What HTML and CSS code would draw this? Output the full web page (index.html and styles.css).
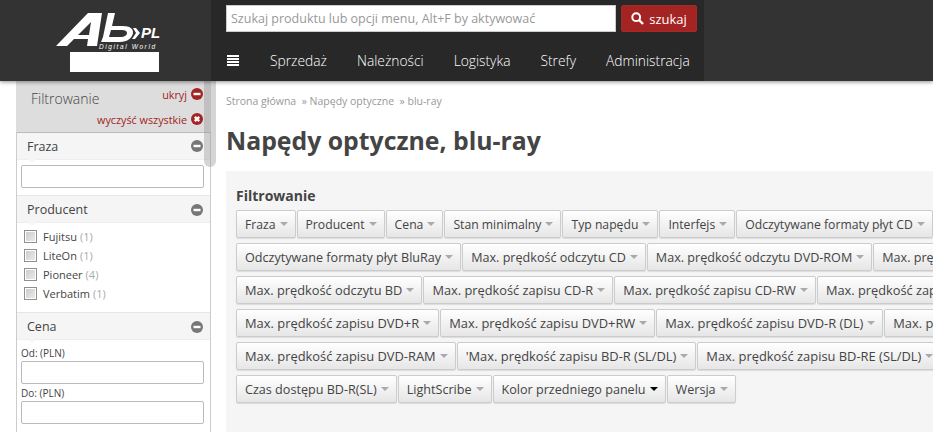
FILE: index.html
```html
<!DOCTYPE html>
<html lang="en">
<head>
  <meta charset="UTF-8" />
  <title>Napędy optyczne, blu-ray</title>
  <link rel="stylesheet" href="styles.css">
</head>
<body>
  <svg class="sprite" width="0" height="0">
    <symbol id="minus" viewBox="0 0 12 12">
      <circle cx="6" cy="6" r="6" fill="currentColor" />
      <rect x="2.5" y="4.8" width="7" height="2.4" fill="#fff" />
    </symbol>
    <symbol id="cross" viewBox="0 0 12 12">
      <circle cx="6" cy="6" r="6" fill="currentColor" />
      <path d="M3.8 3.8l4.4 4.4M8.2 3.8l-4.4 4.4" stroke="#fff" stroke-width="2.4" />
    </symbol>
  </svg>

  <header class="topbar">
    <div class="logo-area">
      <svg class="logo" width="114" height="38" viewBox="0 0 114 38">
        <path fill-rule="evenodd" d="M0 36L32 3h14l-5 33H31l1-7H18l-7 7zM22 25h11l2-13z" fill="#fff" />
        <path fill-rule="evenodd" d="M52 3h7l-3 13h11c7 0 10 3 10 6 0 6-6 10-13 10H45l2-5h17c5 0 7-2 7-4 0-2-2-3-5-3H55l-2 7h-6z" fill="#fff" />
        <path d="M77 18h3l4 5-5 6h-3l4-6z" fill="#fff" />
        <text x="85" y="28" class="logo-pl">PL</text>
        <text x="43" y="39" class="logo-sub">Digital World</text>
      </svg>
      <div class="logo-box"></div>
    </div>
    <div class="top-center">
      <form class="search">
        <input class="search-input" type="text" placeholder="Szukaj produktu lub opcji menu, Alt+F by aktywować" />
        <button class="search-btn" type="button">
          <svg width="13" height="13" viewBox="0 0 13 13">
            <circle cx="5.2" cy="5.2" r="3.9" fill="none" stroke="#fff" stroke-width="2" />
            <path d="M8 8l4 4" stroke="#fff" stroke-width="2.4" />
          </svg>
          szukaj
        </button>
      </form>
      <nav class="nav">
        <span class="burger"><i></i><i></i><i></i><i></i></span>
        <a>Sprzedaż</a>
        <a>Należności</a>
        <a>Logistyka</a>
        <a>Strefy</a>
        <a>Administracja</a>
      </nav>
    </div>
  </header>

  <div class="page">
    <aside class="sidebar">
      <div class="side-top">
        <span class="side-title">Filtrowanie</span>
        <div class="side-links">
          <a class="side-link">ukryj <svg width="12" height="12"><use href="#minus" /></svg></a>
          <a class="side-link">wyczyść wszystkie <svg width="12" height="12"><use href="#cross" /></svg></a>
        </div>
      </div>
      <div class="side-box">
        <section>
          <h3 class="sec-head">Fraza <svg width="12" height="12"><use href="#minus" /></svg></h3>
          <div class="sec-body"><input class="field" type="text" /></div>
        </section>
        <section>
          <h3 class="sec-head">Producent <svg width="12" height="12"><use href="#minus" /></svg></h3>
          <div class="sec-body checks">
            <label><input class="check" type="checkbox" />Fujitsu <em>(1)</em></label>
            <label><input class="check" type="checkbox" />LiteOn <em>(1)</em></label>
            <label><input class="check" type="checkbox" />Pioneer <em>(4)</em></label>
            <label><input class="check" type="checkbox" />Verbatim <em>(1)</em></label>
          </div>
        </section>
        <section>
          <h3 class="sec-head">Cena <svg width="12" height="12"><use href="#minus" /></svg></h3>
          <div class="sec-body prices">
            <label>Od: (PLN)</label>
            <input class="field" type="text" />
            <label>Do: (PLN)</label>
            <input class="field" type="text" />
          </div>
        </section>
      </div>
      <div class="side-scroll"></div>
    </aside>

    <main class="content">
      <div class="crumbs">Strona główna &nbsp;»&nbsp;Napędy optyczne &nbsp;»&nbsp;blu-ray</div>
      <h1>Napędy optyczne, blu-ray</h1>
      <div class="filters">
        <h4>Filtrowanie</h4>
        <div class="filter-row tight">
          <button>Fraza<b></b></button>
          <button>Producent<b></b></button>
          <button>Cena<b></b></button>
          <button>Stan minimalny<b></b></button>
          <button>Typ napędu<b></b></button>
          <button>Interfejs<b></b></button>
          <button>Odczytywane formaty płyt CD<b></b></button>
        </div>
        <div class="filter-row">
          <button>Odczytywane formaty płyt BluRay<b></b></button>
          <button>Max. prędkość odczytu CD<b></b></button>
          <button>Max. prędkość odczytu DVD-ROM<b></b></button>
          <button>Max. prędkość odczytu DVD<b></b></button>
        </div>
        <div class="filter-row mid">
          <button>Max. prędkość odczytu BD<b></b></button>
          <button>Max. prędkość zapisu CD-R<b></b></button>
          <button>Max. prędkość zapisu CD-RW<b></b></button>
          <button>Max. prędkość zapisu DVD-R<b></b></button>
        </div>
        <div class="filter-row wide">
          <button>Max. prędkość zapisu DVD+R<b></b></button>
          <button>Max. prędkość zapisu DVD+RW<b></b></button>
          <button>Max. prędkość zapisu DVD-R (DL)<b></b></button>
          <button>Max. prędkość zapisu DVD+R (DL)<b></b></button>
        </div>
        <div class="filter-row wide">
          <button>Max. prędkość zapisu DVD-RAM<b></b></button>
          <button>'Max. prędkość zapisu BD-R (SL/DL)<b></b></button>
          <button>Max. prędkość zapisu BD-RE (SL/DL)<b></b></button>
        </div>
        <div class="filter-row">
          <button>Czas dostępu BD-R(SL)<b></b></button>
          <button>LightScribe<b></b></button>
          <button>Kolor przedniego panelu<b class="dark"></b></button>
          <button>Wersja<b></b></button>
        </div>
      </div>
    </main>
  </div>
</body>
</html>
```

FILE: styles.css
```css
html, body {
  margin: 0;
  height: 432px;
  overflow: hidden;
}
body {
  font-family: "Open Sans", sans-serif;
  font-size: 12px;
  background: #fff;
  color: #444;
}
.sprite {
  position: absolute;
}

/* top bar */
.topbar {
  position: relative;
  z-index: 3;
  display: flex;
  height: 81px;
  background: #333;
  box-shadow: 0 1px 4px rgba(0,0,0,0.45);
}
.logo-area {
  width: 211px;
  box-sizing: border-box;
  padding: 10px 0 0 56px;
}
.logo {
  display: block;
  overflow: visible;
}
.logo-pl {
  font: italic bold 15px "Liberation Sans", sans-serif;
  fill: #fff;
}
.logo-sub {
  font: italic 6.5px "Liberation Sans", sans-serif;
  letter-spacing: 1.6px;
  fill: #fff;
}
.logo-box {
  width: 89px;
  height: 20px;
  margin: 4px 0 0 14px;
  background: #fff;
}
.top-center {
  width: 493px;
  background: #282828;
  box-sizing: border-box;
  padding: 5px 7px 0 15px;
}
.search {
  display: flex;
  justify-content: space-between;
}
.search-input {
  width: 390px;
  height: 27px;
  box-sizing: border-box;
  padding: 0 4px;
  border: 1px solid #ccc;
  font-family: inherit;
  font-size: 12.5px;
}
.search-input::placeholder {
  color: #999;
  opacity: 1;
}
.search-btn {
  display: flex;
  align-items: center;
  justify-content: center;
  gap: 5px;
  width: 76px;
  height: 27px;
  padding: 0;
  border: 1px solid #a52a26;
  border-radius: 2px;
  background: #a32422;
  color: #fff;
  font-family: inherit;
  font-size: 13px;
}
.nav {
  display: flex;
  align-items: center;
  gap: 30px;
  height: 28px;
  margin-top: 14px;
  color: #fff;
  font-size: 13.8px;
  font-weight: 300;
}
.burger {
  display: flex;
  flex: none;
  flex-direction: column;
  gap: 1px;
  width: 12px;
  margin: 0 1px;
}
.burger i {
  display: block;
  height: 2px;
  background: #fff;
}

/* layout */
.page {
  display: flex;
  height: 351px;
}

/* left side */
.sidebar {
  position: relative;
  width: 195px;
  margin-left: 16px;
  flex: none;
}
.side-top {
  display: flex;
  justify-content: space-between;
  height: 51px;
  box-sizing: border-box;
  padding: 9px 8px 0 15px;
  background: #ddd;
}
.side-title {
  width: 60px;
  font-size: 14px;
  font-weight: 300;
  color: #444;
  line-height: 18px;
  white-space: nowrap;
}
.side-links {
  display: flex;
  flex-direction: column;
  align-items: flex-end;
  gap: 7px;
  margin-top: -5px;
}
.side-link {
  display: flex;
  align-items: center;
  gap: 4px;
  height: 18px;
  font-size: 10.8px;
  color: #a32422;
  white-space: nowrap;
}
.side-link svg {
  color: #a32422;
}
.side-box {
  border: 1px solid #ccc;
  border-top-color: #bbb;
  border-bottom-color: #ddd;
  background: #fff;
}
.sec-head {
  position: relative;
  display: flex;
  justify-content: space-between;
  align-items: center;
  height: 27px;
  margin: 0;
  padding: 0 7px 0 10px;
  background: #f5f5f5;
  border-bottom: 1px solid #eee;
  box-sizing: border-box;
  font-size: 12.5px;
  font-weight: 400;
  color: #444;
}
.sec-head svg {
  color: #777;
}
.sec-head::after {
  content: "";
  position: absolute;
  left: 11px;
  bottom: -4px;
  border-top: 4px solid #f5f5f5;
  border-left: 4px solid transparent;
  border-right: 4px solid transparent;
}
section + section .sec-head {
  height: 28px;
  padding-top: 1px;
  border-top: 1px solid #e6e6e6;
}
.sec-body {
  padding: 5px 6px 7px 4px;
}
.field {
  display: block;
  width: 100%;
  height: 23px;
  box-sizing: border-box;
  border: 1px solid #bbb;
  border-radius: 2px;
}
.checks {
  padding: 4px 6px 9px 7px;
}
.checks label {
  display: flex;
  align-items: center;
  height: 19px;
  font-size: 11px;
  color: #444;
}
.checks em {
  margin-left: 3px;
  font-style: normal;
  color: #aaa;
}
.check {
  appearance: none;
  width: 13px;
  height: 13px;
  margin: 0 6px 0 0;
  border: 1px solid #8e8f8f;
  background: linear-gradient(135deg, #c9c9c9, #ededed);
  box-shadow: inset 0 0 0 1px #fff;
}
.prices {
  padding-top: 6px;
  font-size: 10px;
  line-height: 15px;
}
.prices label {
  display: block;
  height: 15px;
}
.prices .field {
  margin-bottom: 2px;
}
.side-scroll {
  position: absolute;
  top: 0;
  right: -5px;
  width: 12px;
  height: 86px;
  background: rgba(150,150,150,0.4);
  border-radius: 0 0 6px 6px;
}

/* main part */
.content {
  flex: 1;
  min-width: 0;
  padding: 13px 0 0 15px;
}
.crumbs {
  font-size: 10.5px;
  line-height: 14px;
  color: #999;
}
h1 {
  margin: 14px 0 0;
  font-size: 24.8px;
  line-height: 36px;
  font-weight: 700;
  color: #444;
}
.filters {
  width: 900px;
  height: 270px;
  margin-top: 13px;
  padding: 15px 10px 0;
  background: #f5f5f5;
  box-sizing: border-box;
}
h4 {
  margin: 0 0 5px;
  font-size: 14px;
  line-height: 19px;
  font-weight: 700;
  color: #444;
}
.filter-row {
  display: flex;
  gap: 1px;
  margin-bottom: 5px;
  font-size: 12.6px;
}
.filter-row.tight {
  font-size: 12.2px;
}
.filter-row.mid {
  font-size: 12.8px;
}
.filter-row.wide {
  font-size: 12.9px;
}
.filter-row button {
  display: flex;
  align-items: center;
  flex: none;
  height: 28px;
  padding: 0 7px 0 8px;
  border: 1px solid #ccc;
  border-radius: 2px;
  background: linear-gradient(#fff, #e6e6e6);
  box-shadow: 0 1px 1px rgba(0,0,0,0.1);
  font-family: inherit;
  font-size: inherit;
  color: #444;
  white-space: nowrap;
}
.filter-row b {
  margin-left: 4px;
  border-top: 4px solid #aaa;
  border-left: 4px solid transparent;
  border-right: 4px solid transparent;
}
.filter-row b.dark {
  border-top-color: #000;
}
```
